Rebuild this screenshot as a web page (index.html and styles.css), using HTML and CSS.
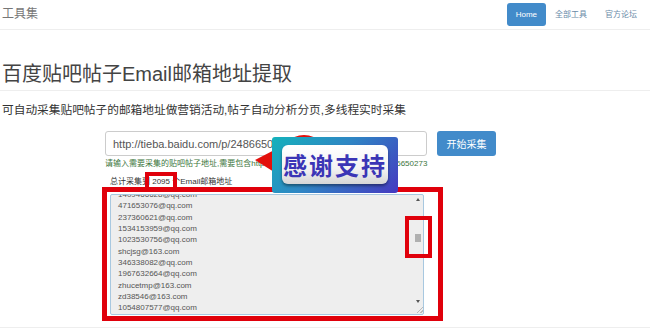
FILE: index.html
```html
<!DOCTYPE html>
<html lang="zh_CN">
<head>
    <meta charset="UTF-8">
    <title>百度贴吧帖子Email邮箱地址提取</title>
    <link rel="stylesheet" href="styles.css">
</head>
<body>
<nav class="navbar">
    <span class="brand">工具集</span>
    <ul class="nav">
        <li class="active">Home</li>
        <li>全部工具</li>
        <li>官方论坛</li>
    </ul>
</nav>
<div class="page">
    <h1 class="title">百度贴吧帖子Email邮箱地址提取</h1>
    <p class="lead">可自动采集贴吧帖子的邮箱地址做营销活动,帖子自动分析分页,多线程实时采集</p>
    <div class="tool">
        <div class="row">
            <input class="url" type="text" value="http://tieba.baidu.com/p/2486650273">
            <button class="btn">开始采集</button>
        </div>
        <p class="help">请输入需要采集的贴吧帖子地址,需要包含http://格式如:http://tieba.baidu.com/p/2486650273</p>
        <p class="count">总计采集到 2095 个Email邮箱地址</p>
        <div class="result">
            <div class="lines">
                <div>1409466628@qq.com</div>
                <div>471653076@qq.com</div>
                <div>237360621@qq.com</div>
                <div>1534153959@qq.com</div>
                <div>1023530756@qq.com</div>
                <div>shcjsg@163.com</div>
                <div>346338082@qq.com</div>
                <div>1967632664@qq.com</div>
                <div>zhucetmp@163.com</div>
                <div>zd38546@163.com</div>
                <div>1054807577@qq.com</div>
            </div>
            <div class="scroll">
                <span class="arrow-up"></span>
                <span class="thumb"></span>
                <span class="arrow-down"></span>
                <span class="grip"></span>
            </div>
        </div>

        <!-- 标注 -->
        <div class="mark mark-all"></div>
        <div class="mark mark-num"></div>
        <div class="mark mark-bar"></div>
        <svg class="bubble" width="90" height="60" viewBox="0 0 90 60">
            <polygon points="5,29 34,14 32,46" fill="#e3100c"/>
            <circle cx="54" cy="29" r="25" fill="#e3100c"/>
        </svg>
        <div class="thanks">
            <div class="thanks-inner">感谢支持</div>
        </div>
    </div>
</div>
<div class="footer"></div>
</body>
</html>
```

FILE: styles.css
```css
*{
    box-sizing: border-box;
}
body{
    margin: 0;
    font-family: "Liberation Sans", "Noto Sans CJK SC", sans-serif;
    color: #333;
    background: #fff;
}
.navbar{
    height: 30px;
    display: flex;
    justify-content: space-between;
    align-items: center;
    border-bottom: 1px solid #eee;
    padding: 0 4px 0 2px;
}
.brand{
    align-self: flex-start;
    padding-top: 4px;
    font-size: 12px;
    color: #777;
}
.nav{
    display: flex;
    list-style: none;
    margin: 0;
    padding: 0;
}
.nav li{
    padding: 0 9px;
    line-height: 23px;
    font-size: 8px;
    color: #6a8aa8;
    border-radius: 3px;
}
.nav li.active{
    background: #428bca;
    color: #fff;
}
.title{
    margin: 32px 0 0;
    padding: 0 2px 4px;
    font-size: 20px;
    line-height: 24px;
    font-weight: normal;
    color: #444;
    border-bottom: 1px solid #eee;
}
.lead{
    margin: 12px 0 0;
    padding-left: 2px;
    font-size: 11.7px;
    line-height: 14px;
}
.tool{
    position: relative;
    margin: 14px 0 0 105px;
    width: 392px;
}
.row{
    display: flex;
}
.url{
    flex: none;
    width: 322px;
    height: 25px;
    margin: 0;
    padding: 0 7px;
    border: 1px solid #ccc;
    border-radius: 3px;
    font-family: inherit;
    font-size: 11px;
    color: #555;
    outline: none;
}
.btn{
    flex: none;
    margin-left: 10px;
    width: 59px;
    height: 25px;
    border: 0;
    border-radius: 3px;
    background: #428bca;
    color: #fff;
    font-family: inherit;
    font-size: 10px;
}
.help{
    margin: 3px 0 0;
    font-size: 8px;
    line-height: 10px;
    color: #3c763d;
    white-space: nowrap;
}
.count{
    margin: 8px 0 0;
    padding-left: 5px;
    font-size: 8px;
    line-height: 10px;
}
.result{
    display: flex;
    margin: 7px 0 0 5px;
    width: 314px;
    height: 121px;
    border: 1px solid #a8c8e0;
    border-radius: 2px;
    background: #eee;
    overflow: hidden;
}
.lines{
    flex: 1;
    margin-top: -6px;
    padding-left: 7px;
    font-size: 8px;
    line-height: 11.35px;
    color: #555;
}
.scroll{
    width: 10px;
    display: flex;
    flex-direction: column;
    align-items: center;
    padding: 3px 0 1px;
}
.arrow-up{
    width: 0;
    height: 0;
    border-left: 2px solid transparent;
    border-right: 2px solid transparent;
    border-bottom: 3px solid #555;
}
.thumb{
    margin-top: 33px;
    width: 6px;
    height: 8px;
    background: #b0b0b0;
}
.arrow-down{
    margin-top: auto;
    width: 0;
    height: 0;
    border-left: 2px solid transparent;
    border-right: 2px solid transparent;
    border-top: 3px solid #555;
}
.grip{
    margin-top: 4px;
    align-self: flex-end;
    width: 6px;
    height: 6px;
    background: linear-gradient(135deg, transparent 45%, #bbb 45%, #bbb 55%, transparent 55%, transparent 75%, #bbb 75%, #bbb 85%, transparent 85%);
}
.mark{
    position: absolute;
    border: 4px solid #e0000b;
}
.mark-all{
    left: -3px;
    top: 56px;
    width: 341px;
    height: 134px;
    border-width: 5px;
}
.mark-num{
    left: 40px;
    top: 41px;
    width: 32px;
    height: 18px;
    border-bottom: 0;
}
.mark-bar{
    left: 300px;
    top: 85px;
    width: 27px;
    height: 42px;
}
.bubble{
    position: absolute;
    left: 145px;
    top: 0;
}
.thanks{
    position: absolute;
    left: 167px;
    top: 6px;
    width: 126px;
    height: 56px;
    padding: 8px 10px 9px;
    border-radius: 3px;
    background: linear-gradient(135deg, #14b2bb 0%, #2f86c4 45%, #4538c0 100%);
}
.thanks-inner{
    height: 100%;
    display: flex;
    align-items: center;
    justify-content: center;
    border-radius: 6px;
    background: linear-gradient(#fff, #f3f3f3 60%, #d6d6d6);
    box-shadow: 0 2px 3px rgba(0,0,0,.4);
    font-size: 24px;
    font-weight: bold;
    letter-spacing: 2px;
    color: #3b35b6;
}
.footer{
    margin-top: 12px;
    border-top: 1px solid #eee;
    height: 10px;
}
```
